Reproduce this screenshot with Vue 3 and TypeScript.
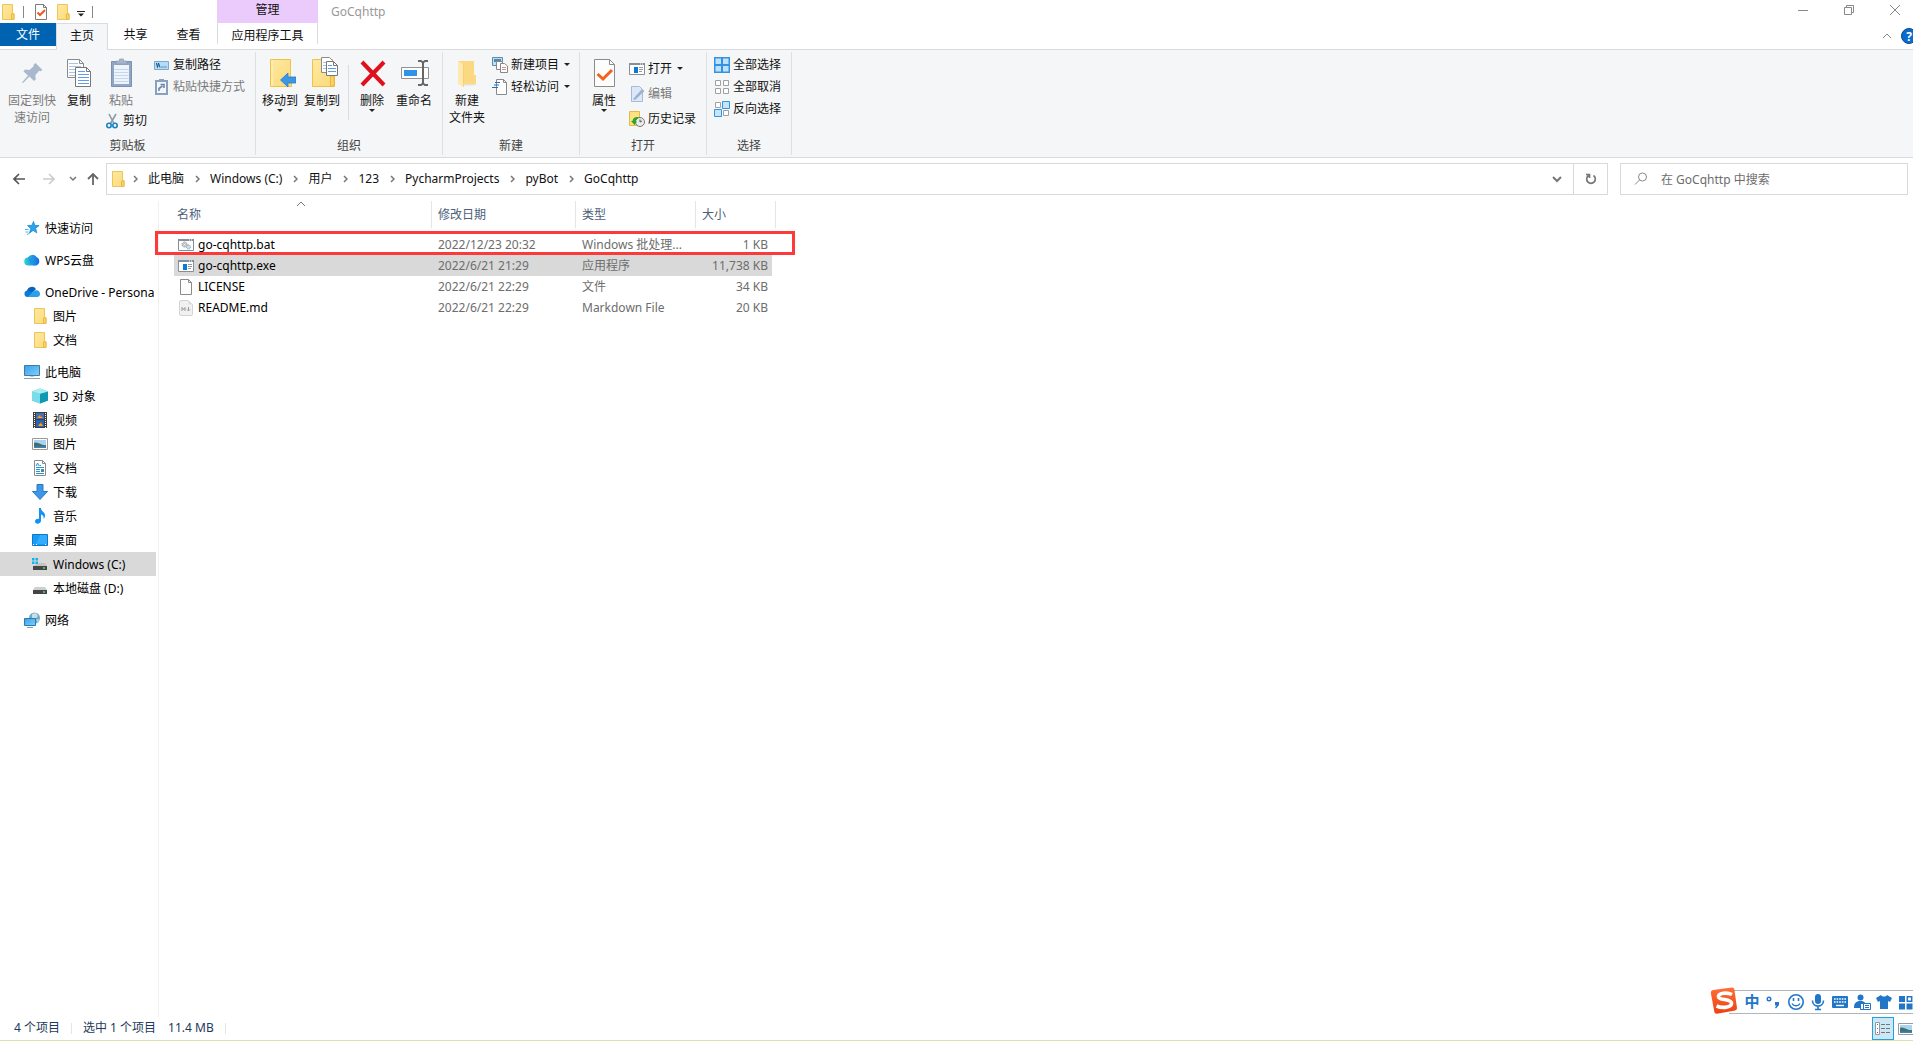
<script setup lang="ts">
interface NavItem {
  label: string
  icon: string
  child?: boolean
  selected?: boolean
}
interface FileRow {
  name: string
  icon: string
  date: string
  type: string
  size: string
  selected?: boolean
}

const navGroups: NavItem[][] = [
  [{ label: '快速访问', icon: 'star' }],
  [{ label: 'WPS云盘', icon: 'wps' }],
  [
    { label: 'OneDrive - Persona', icon: 'onedrive' },
    { label: '图片', icon: 'folder', child: true },
    { label: '文档', icon: 'folder', child: true },
  ],
  [
    { label: '此电脑', icon: 'pc' },
    { label: '3D 对象', icon: 'cube', child: true },
    { label: '视频', icon: 'video', child: true },
    { label: '图片', icon: 'picture', child: true },
    { label: '文档', icon: 'document', child: true },
    { label: '下载', icon: 'download', child: true },
    { label: '音乐', icon: 'music', child: true },
    { label: '桌面', icon: 'desktop', child: true },
    { label: 'Windows (C:)', icon: 'drive-c', child: true, selected: true },
    { label: '本地磁盘 (D:)', icon: 'drive', child: true },
  ],
  [{ label: '网络', icon: 'network' }],
]

const crumbs: string[] = ['此电脑', 'Windows (C:)', '用户', '123', 'PycharmProjects', 'pyBot', 'GoCqhttp']

const files: FileRow[] = [
  { name: 'go-cqhttp.bat', icon: 'bat', date: '2022/12/23 20:32', type: 'Windows 批处理...', size: '1 KB' },
  { name: 'go-cqhttp.exe', icon: 'exe', date: '2022/6/21 21:29', type: '应用程序', size: '11,738 KB', selected: true },
  { name: 'LICENSE', icon: 'blank', date: '2022/6/21 22:29', type: '文件', size: '34 KB' },
  { name: 'README.md', icon: 'md', date: '2022/6/21 22:29', type: 'Markdown File', size: '20 KB' },
]

const imeIcons: string[] = ['punct', 'smile', 'mic', 'keyboard', 'user', 'shirt', 'grid']
</script>

<template>
  <div class="window">
    <svg class="sprite" aria-hidden="true">
      <defs>
        <linearGradient id="g-folder" x1="0" y1="0" x2="1" y2="1">
          <stop offset="0" stop-color="#ffe9a2" /><stop offset="1" stop-color="#fbd978" />
        </linearGradient>
        <linearGradient id="g-sky" x1="0" y1="0" x2="1" y2="1">
          <stop offset="0" stop-color="#3aa0ee" /><stop offset="1" stop-color="#7fd0fb" />
        </linearGradient>
        <linearGradient id="g-wps" x1="0" y1="0" x2="1" y2="0">
          <stop offset="0" stop-color="#2fd6c8" /><stop offset="1" stop-color="#1268f0" />
        </linearGradient>
        <linearGradient id="g-sogou" x1="0" y1="0" x2="0" y2="1">
          <stop offset="0" stop-color="#ff7038" /><stop offset="1" stop-color="#ee4012" />
        </linearGradient>
      </defs>
      <symbol id="folder" viewBox="0 0 16 16">
        <path d="M2.500.5h10v9h1.500v6h-11.500z" fill="url(#g-folder)" stroke="#ecc556" />
        <path d="M11.500 15.500v-5.500h2.500v5.500z" fill="#fbd36a" stroke="#e8bb45" />
      </symbol>
      <symbol id="doc-check" viewBox="0 0 16 16">
        <path d="M2.500.5h8l3 3v12h-11z" fill="#fff" stroke="#7d7d7d" />
        <path d="M10.500.5v3h3" fill="none" stroke="#7d7d7d" />
        <path d="M4.500 8.500l2.500 2.500 5-5" fill="none" stroke="#f0581c" stroke-width="2" />
      </symbol>
      <symbol id="star" viewBox="0 0 16 16">
        <path d="M9.500 1.500l1.300 4 4.200.1-3.400 2.600 1.200 4.600-3.600-2.400-3.700 2.600 1.400-4.300L3.500 5.500l4.400-.1z" fill="#2aa4ee" stroke="#1c86d2" stroke-width=".8" />
        <path d="M1 9.500h3.500M1.500 12h3M3 14.500l2.500-1" stroke="#4bb4f0" />
      </symbol>
      <symbol id="wps" viewBox="0 0 16 16">
        <path d="M4.500 13.500a4 4 0 0 1-.5-8 5 5 0 0 1 8.500-.5 4.500 4.500 0 0 1-.5 8.500z" fill="url(#g-wps)" />
        <path d="M4 5.500c3 0 5 4 8 8h-2.500C6 11 5 8 4 5.500z" fill="#1c8df4" opacity=".7" />
      </symbol>
      <symbol id="onedrive" viewBox="0 0 16 16">
        <path d="M3 7a5 5 0 0 1 9-2l-4 4z" fill="#0364b8" />
        <path d="M3.500 13A3.300 3.300 0 0 1 3 6.500c3-.5 6 3 9 6.500z" fill="#0f78d4" />
        <path d="M3.500 13l7-6.500c3-1 5.500.5 5.500 3.500a3 3 0 0 1-3 3z" fill="#28a0ea" />
      </symbol>
      <symbol id="pc" viewBox="0 0 16 16">
        <path d="M.5 1.500h15v10h-15z" fill="url(#g-sky)" stroke="#447a9e" />
        <path d="M6 12h4v1H6z" fill="#b8cdd8" /><path d="M0 14.500h16" stroke="#87a4b5" />
      </symbol>
      <symbol id="cube" viewBox="0 0 16 16">
        <path d="M0 3.500L8 .5l8 3v9l-8 3-8-3z" fill="#37b9d0" />
        <path d="M0 3.500l8 2.200v9.800l-8-3z" fill="#79dce6" />
        <path d="M8 5.700l8-2.200v9l-8 3z" fill="#0f97b3" />
        <path d="M0 3.500L8 .5l8 3-8 2.200z" fill="#a8eef0" />
      </symbol>
      <symbol id="video" viewBox="0 0 16 16">
        <path d="M1 0h14v16H1z" fill="#3d3d3d" /><path d="M4 1h8v6H4z" fill="#3d72b8" /><path d="M4 8h8v7H4z" fill="#2b62b0" />
        <path d="M5 6l3-3 3 3zM6 14l3-4 2 4z" fill="#e5a52f" /><path d="M8 4h2M8 11h2" stroke="#d13c2c" />
        <path d="M2.500 1v15M13.500 1v15" stroke="#fff" stroke-dasharray="1 1" />
      </symbol>
      <symbol id="picture" viewBox="0 0 16 16">
        <path d="M.5 2.500h15v11H.5z" fill="#fff" stroke="#9a9a9a" />
        <path d="M2 4h12v8H2z" fill="#a7d4f2" /><path d="M2 7c4-2 7 3 12 2v3H2z" fill="#466e6a" /><path d="M2 10.500h12V12H2z" fill="#3d85b6" />
      </symbol>
      <symbol id="document" viewBox="0 0 16 16">
        <path d="M2.500.5h8l3 3v12h-11z" fill="#fff" stroke="#8a8a8a" /><path d="M10.500.5v3h3" fill="none" stroke="#8a8a8a" />
        <path d="M4 6l1.500-3L7 6M7.500 5.500H9M4 7.500h8M4 9.500h4M4 11.500h4M4 13.500h8" fill="none" stroke="#2196d8" /><path d="M9 9h3v3H9z" fill="#4f87a0" />
      </symbol>
      <symbol id="download" viewBox="0 0 16 16">
        <path d="M5 .5h6v7h4.500L8 15.500.5 7.500H5z" fill="#3d97e6" stroke="#2e79c4" />
      </symbol>
      <symbol id="music" viewBox="0 0 16 16">
        <path d="M7 0h2c0 4 4.500 4 4 8-.2 1.500-1 2.500-1.500 3 .5-3-.5-4-2.500-4.500V12.500c0 4-6 4-6 1 0-2 2-3 4-2.500z" fill="#1192f5" />
      </symbol>
      <symbol id="desktop" viewBox="0 0 16 16">
        <path d="M.5 2.500h15v11H.5z" fill="#169df8" stroke="#0f79c9" /><path d="M8 3h7v9H4z" fill="#32acfb" /><path d="M1 12.500h14" stroke="#fff" stroke-dasharray="1 2 1 8" />
      </symbol>
      <symbol id="drive" viewBox="0 0 16 16">
        <path d="M3 7h10l2 3H1z" fill="#cfcfcf" /><path d="M1 10h14v4H1z" fill="#454545" /><path d="M11 12h2" stroke="#4ee060" stroke-width="1.500" />
      </symbol>
      <symbol id="drive-c" viewBox="0 0 16 16">
        <path d="M5 7h8l2 3H2z" fill="#c4c4c4" /><path d="M1 10h14v4H1z" fill="#454545" /><path d="M11 12h2" stroke="#4ee060" stroke-width="1.500" />
        <path d="M0 2h2.500v2.500H0zM3.500 2H6v2.500H3.500zM0 5.500h2.500V8H0zM3.500 5.500H6V8H3.500z" fill="#10b2f0" />
      </symbol>
      <symbol id="network" viewBox="0 0 16 16">
        <circle cx="10.500" cy="6" r="5.500" fill="#6faac8" /><path d="M8 2l4-1 2 3-3 3-3-1zM12 8l3-1-1 3z" fill="#c5dfe9" />
        <path d="M.5 6.500h11v7H.5z" fill="url(#g-sky)" stroke="#2d78ad" /><path d="M3 15.500h6" stroke="#6fa1c0" />
      </symbol>
      <symbol id="bat" viewBox="0 0 16 16">
        <path d="M.5 2.500h15v11H.5z" fill="#fff" stroke="#878f96" /><path d="M0 2h16v2H0z" fill="#878f96" />
        <path d="M11 3h1M13 3h1" stroke="#fff" />
        <circle cx="6.500" cy="7.500" r="2.500" fill="#ddd" stroke="#888" stroke-dasharray="1 .6" /><circle cx="6.500" cy="7.500" r="1" fill="#fff" stroke="#999" stroke-width=".6" />
        <circle cx="10.500" cy="10" r="2" fill="#c5e0f4" stroke="#6d98b8" stroke-dasharray="1 .6" />
      </symbol>
      <symbol id="exe" viewBox="0 0 16 16">
        <path d="M.5 2.500h15v11H.5z" fill="#fff" stroke="#878f96" /><path d="M0 2h16v2H0z" fill="#878f96" />
        <path d="M11 3h1M13 3h1" stroke="#fff" /><path d="M5 6h4v6H5z" fill="#0a78d6" /><path d="M10 6.500h4M10 8.500h4M10 10.500h3" stroke="#999" />
      </symbol>
      <symbol id="blank" viewBox="0 0 16 16">
        <path d="M2.500.5h8l3 3v12h-11z" fill="#fdfdfd" stroke="#8a8a8a" /><path d="M10.500.5v3h3" fill="none" stroke="#8a8a8a" />
      </symbol>
      <symbol id="md" viewBox="0 0 16 16">
        <path d="M3 .5h7.500l4 4V14a1.500 1.500 0 0 1-1.500 1.500H3A1.500 1.500 0 0 1 1.500 14V2A1.500 1.500 0 0 1 3 .5z" fill="#f1f1f1" stroke="#d4d4d4" /><path d="M10.500.5v4h4" fill="#ddd" />
        <path d="M4 11V7.500l1.500 2 1.500-2V11M10.500 7v3.500M9 9.500l1.500 1.500L12 9.500" fill="none" stroke="#999" />
      </symbol>
      <symbol id="pin" viewBox="0 0 32 32">
        <path d="M19.500 6l7 7-2 1.200-1.300-.4-3.800 4.200.3 4.500-1.700 1.500-4.500-4.500L7 26l-1-.5 6-7-4.500-4 1.500-2 4.500.4 4.300-3.800-.3-1.400z" fill="#a9b8cd" />
      </symbol>
      <symbol id="copy" viewBox="0 0 32 32">
        <path d="M4.500 2.500h12l4 4v14h-16z" fill="#fdfdfd" stroke="#8b8b8b" /><path d="M16.500 2.500v4h4" fill="none" stroke="#8b8b8b" />
        <path d="M6 6.500h9M6 9.500h12M6 12.500h6M6 15.500h6M6 18.500h6" stroke="#a5c4ea" />
        <path d="M12.500 10.500h11l4 4v15h-15z" fill="#fff" stroke="#777" /><path d="M23.500 10.500v4h4" fill="none" stroke="#777" />
        <path d="M15 14.500h7M15 17.500h11M15 20.500h11M15 23.500h11M15 26.500h11" stroke="#5d9cec" />
      </symbol>
      <symbol id="paste" viewBox="0 0 32 32">
        <path d="M6.500 4.500h20v25h-20z" fill="#91a5c4" stroke="#7c91b3" /><path d="M9 8h15v19H9z" fill="#eef4fc" />
        <path d="M9.500 12.500h14M9.500 15.500h14M9.500 18.500h14M9.500 21.500h14M9.500 24.500h14" stroke="#c7d6ec" />
        <path d="M11 7V4h3.500V2h4v2H22v3z" fill="#a6b5cc" stroke="#8496b4" stroke-width=".6" />
      </symbol>
      <symbol id="cut" viewBox="0 0 16 16">
        <path d="M5 1l5 9.500M12 1L6.500 10.500" stroke="#8d9aa6" stroke-width="1.600" /><circle cx="5" cy="12.500" r="2.200" fill="none" stroke="#1684c6" stroke-width="1.600" /><circle cx="11" cy="12.500" r="2.200" fill="none" stroke="#1684c6" stroke-width="1.600" />
      </symbol>
      <symbol id="path" viewBox="0 0 16 16">
        <path d="M.5 4.500h14v8H.5z" fill="#b4dcf8" stroke="#7ea9c9" /><path d="M2.500 6l1 4.500 1-4.500 1.500 4.500M7.500 10h1M9.500 10h1M11.500 10h1" fill="none" stroke="#1b4f7c" />
      </symbol>
      <symbol id="paste-link" viewBox="0 0 16 16">
        <path d="M2 2h11v13H2z" fill="#f3f7fc" stroke="#8b9fbe" stroke-width="2" /><path d="M5 0h5v3H5z" fill="#8b9fbe" />
        <path d="M5 12V9.500L8.500 7M6.500 5.500H10V9" fill="none" stroke="#6d86ac" stroke-width="1.600" />
      </symbol>
      <symbol id="move-to" viewBox="0 0 32 32">
        <path d="M6.500 2.500h20v19h1v8h-21z" fill="url(#g-folder)" stroke="#ecc248" /><path d="M8 3v26" stroke="#fff3c8" />
        <path d="M16.500 23l7.500-7v4h8v6h-8v4z" fill="#3a96e6" stroke="#2b7dc9" stroke-width=".8" />
      </symbol>
      <symbol id="copy-to" viewBox="0 0 32 32">
        <path d="M6.500 2.500h20v17h2v10h-22z" fill="url(#g-folder)" stroke="#ecc248" /><path d="M24.500 29v-10h3.500v10z" fill="#fbd36a" stroke="#e8b93a" />
        <path d="M15.500.5h8l3 3v12h-11z" fill="#fff" stroke="#8b8b8b" /><path d="M17 5.500h4M17 8.500h4M17 11.500h4" stroke="#a5c4ea" />
        <path d="M20.500 4.500h7l4 4v10h-11z" fill="#fff" stroke="#777" /><path d="M27.500 4.500v4h4" fill="none" stroke="#777" /><path d="M22 8.500h4M22 11.500h8M22 14.500h8" stroke="#5d9cec" />
      </symbol>
      <symbol id="delete" viewBox="0 0 32 32">
        <path d="M6 5L28 28M28 5L6 28" stroke="#e0101a" stroke-width="4" />
      </symbol>
      <symbol id="rename" viewBox="0 0 32 32">
        <path d="M3.500 10.500h27v11h-27z" fill="#fff" stroke="#919191" /><path d="M6 13h13v6H6z" fill="#2f93ea" />
        <path d="M25 5v22" stroke="#666" stroke-width="2" /><path d="M20 4h3l2 1.500 2-1.500h3M20 28h3l2-1.500 2 1.500h3" fill="none" stroke="#666" stroke-width="2" />
      </symbol>
      <symbol id="new-folder" viewBox="0 0 32 32">
        <path d="M7 4h16v14h2v9h-14z" fill="#fbd980" /><path d="M7 4l5.500 3.500V30L7 27z" fill="#ffe9ae" /><path d="M12.500 7.500V30" stroke="#f0c65e" stroke-width=".6" /><path d="M13 27h13l-3 1.500h-10z" fill="#e8e2d0" />
      </symbol>
      <symbol id="new-item" viewBox="0 0 16 16">
        <path d="M.5.5h10v8H.5z" fill="#bfe0f4" stroke="#5f8ba6" /><path d="M2 2h7v3H2z" fill="#4e8bb2" />
        <path d="M4.500 4.500h6v8h-6z" fill="#fff" stroke="#888" /><path d="M8.500 6.500h4l3 2.500v6.500h-7z" fill="#fff" stroke="#888" /><path d="M10 10.500h4M10 12.500h4" stroke="#d98c8c" />
      </symbol>
      <symbol id="easy" viewBox="0 0 16 16">
        <path d="M4.500.5h7l3 3v12h-10z" fill="#fff" stroke="#8a8a8a" /><path d="M11.500.5v3h3" fill="none" stroke="#8a8a8a" /><path d="M3 3.500h5M2 6h5M0 8.500h6" stroke="#2072b8" stroke-width="1.200" />
      </symbol>
      <symbol id="props" viewBox="0 0 32 32">
        <path d="M6.500 2.500h15l5 5v22h-20z" fill="#fdfdfd" stroke="#8b8b8b" /><path d="M21.500 2.500v5h5" fill="none" stroke="#8b8b8b" /><path d="M9.500 17l5.500 5 9-9" fill="none" stroke="#f2641c" stroke-width="3" />
      </symbol>
      <symbol id="edit" viewBox="0 0 16 16">
        <path d="M2.500.5h8l3 3v12h-11z" fill="#dce8f7" stroke="#a7bbd6" /><path d="M4 13l9-10 2.500 2L6 14z" fill="#9db2d0" />
      </symbol>
      <symbol id="history" viewBox="0 0 16 16">
        <path d="M.5.5h10v14H.5z" fill="#ffe17e" stroke="#e2bb48" /><circle cx="11" cy="11" r="4.500" fill="#ececec" stroke="#777" /><path d="M11 8.500V11l2-1" fill="none" stroke="#555" />
        <path d="M2 10l3.500 4 2.500-3.500H6.500c.5-2 2-3.500 4.500-4-4-1.500-7 0-7.500 3.500z" fill="#28a828" />
      </symbol>
      <symbol id="sel-all" viewBox="0 0 16 16">
        <path d="M0 0h16v16H0z" fill="#3492e2" /><path d="M1.500 1.500H7V7H1.500zM9 1.500h5.500V7H9zM1.500 9H7v5.500H1.500zM9 9h5.500v5.500H9z" fill="#bfe2fc" />
      </symbol>
      <symbol id="sel-none" viewBox="0 0 16 16">
        <path d="M1.500 1.500h5v5h-5zM9.500 1.500h5v5h-5zM1.500 9.500h5v5h-5zM9.500 9.500h5v5h-5z" fill="#fff" stroke="#a0a0a0" />
      </symbol>
      <symbol id="sel-inv" viewBox="0 0 16 16">
        <path d="M1.500 1.500h5v5h-5zM9.500 9.500h5v5h-5z" fill="#fff" stroke="#a0a0a0" /><path d="M8.500.5h7v7h-7zM.5 8.500h7v7h-7z" fill="#c5e5fd" stroke="#3492e2" />
      </symbol>
      <symbol id="punct" viewBox="0 0 18 18">
        <circle cx="4" cy="6" r="1.800" fill="none" stroke="#2176c7" stroke-width="1.400" /><path d="M10 9h4v3l-3 3.500-1-.8 1.500-2.200H10z" fill="#2176c7" />
      </symbol>
      <symbol id="smile" viewBox="0 0 18 18">
        <circle cx="9" cy="9" r="7.200" fill="none" stroke="#2176c7" stroke-width="1.600" /><path d="M6.500 5v3M11.500 5v3" stroke="#2176c7" stroke-width="1.600" /><path d="M5 10.500c1.500 3 6.500 3 8 0" fill="none" stroke="#2176c7" stroke-width="1.400" />
      </symbol>
      <symbol id="mic" viewBox="0 0 18 18">
        <rect x="6" y="1" width="6" height="10" rx="3" fill="#2176c7" /><path d="M3.500 7.500c0 7.500 11 7.500 11 0M9 13v3.500M6 16.500h6" fill="none" stroke="#2176c7" stroke-width="1.600" />
      </symbol>
      <symbol id="keyboard" viewBox="0 0 18 18">
        <rect x="1" y="3" width="16" height="12" rx="1" fill="#2176c7" /><path d="M3 6h12M3 9h12" stroke="#fff" stroke-width="1.600" stroke-dasharray="1.600 1" /><path d="M5 12.500h8" stroke="#fff" stroke-width="1.400" />
      </symbol>
      <symbol id="user" viewBox="0 0 18 18">
        <circle cx="7.500" cy="4.500" r="3" fill="#2176c7" /><path d="M1 15c0-5 2-7 6.500-7S13 10 14 15z" fill="#2176c7" /><path d="M7.500 10.500h10v6h-10z" fill="#fff" stroke="#2176c7" /><path d="M10.500 11v5M12 12.500h4M12 14.500h4" stroke="#2176c7" />
      </symbol>
      <symbol id="shirt" viewBox="0 0 18 18">
        <path d="M6 2c1 2 5 2 6 0l5 3-2 4-2-1v8H5V8L3 9 1 5z" fill="#2176c7" />
      </symbol>
      <symbol id="grid" viewBox="0 0 18 18">
        <path d="M2 3h6v6H2zM2 10.500h6v6H2zM9.500 10.500h6v6h-6z" fill="#2176c7" /><path d="M10.300 3.800h4.400v4.400h-4.400z" fill="#fff" stroke="#2176c7" stroke-width="1.500" />
      </symbol>
    </svg>

    <header class="top">
      <div class="qat">
        <svg class="i16"><use href="#folder" /></svg>
        <i class="qsep"></i>
        <button type="button" aria-label="属性"><svg class="i16"><use href="#doc-check" /></svg></button>
        <button type="button" aria-label="新建文件夹"><svg class="i16"><use href="#folder" /></svg></button>
        <button type="button" aria-label="自定义快速访问工具栏"><svg width="8" height="6" viewBox="0 0 8 6"><path d="M0 0h8v1H0zM1 2.500h6l-3 3z" fill="#222" /></svg></button>
        <i class="qsep"></i>
      </div>
      <div class="context">管理</div>
      <div class="title">GoCqhttp</div>
      <div class="controls">
        <button type="button" aria-label="最小化"><svg width="10" height="10" viewBox="0 0 10 10"><path d="M0 5.500h10" stroke="#888" /></svg></button>
        <button type="button" aria-label="还原"><svg width="10" height="10" viewBox="0 0 10 10"><path d="M.5 2.500h7v7h-7zM2.500 2V.5h7v7H8" fill="none" stroke="#888" /></svg></button>
        <button type="button" aria-label="关闭"><svg width="10" height="10" viewBox="0 0 10 10"><path d="M0 0l10 10M10 0L0 10" stroke="#888" /></svg></button>
      </div>
    </header>

    <nav class="tabs">
      <button type="button" class="tab file">文件</button>
      <button type="button" class="tab home">主页</button>
      <button type="button" class="tab share">共享</button>
      <button type="button" class="tab view">查看</button>
      <button type="button" class="tab tools">应用程序工具</button>
      <div class="help">
        <button type="button" aria-label="折叠功能区"><svg width="8" height="6" viewBox="0 0 8 6"><path d="M0 5l4-4 4 4" fill="none" stroke="#888" /></svg></button>
        <button type="button" class="q" aria-label="帮助">?</button>
      </div>
    </nav>

    <section class="ribbon">
      <div class="group clip">
        <div class="tools-row">
          <button type="button" class="big wide dim"><svg><use href="#pin" /></svg><span>固定到快<br />速访问</span></button>
          <button type="button" class="big"><svg><use href="#copy" /></svg><span>复制</span></button>
          <div class="stack">
            <button type="button" class="big dim"><svg><use href="#paste" /></svg><span>粘贴</span></button>
            <button type="button" class="small cut"><svg class="i16"><use href="#cut" /></svg>剪切</button>
          </div>
          <div class="rows">
            <button type="button" class="small"><svg class="i16"><use href="#path" /></svg>复制路径</button>
            <button type="button" class="small dim"><svg class="i16"><use href="#paste-link" /></svg>粘贴快捷方式</button>
          </div>
        </div>
        <div class="caption">剪贴板</div>
      </div>
      <div class="group org">
        <div class="tools-row">
          <button type="button" class="big"><svg><use href="#move-to" /></svg><span>移动到</span><i class="arrow"></i></button>
          <button type="button" class="big"><svg><use href="#copy-to" /></svg><span>复制到</span><i class="arrow"></i></button>
          <i class="inner"></i>
          <button type="button" class="big"><svg><use href="#delete" /></svg><span>删除</span><i class="arrow"></i></button>
          <button type="button" class="big"><svg><use href="#rename" /></svg><span>重命名</span></button>
        </div>
        <div class="caption">组织</div>
      </div>
      <div class="group new">
        <div class="tools-row">
          <button type="button" class="big mid"><svg><use href="#new-folder" /></svg><span>新建<br />文件夹</span></button>
          <div class="rows">
            <button type="button" class="small"><svg class="i16"><use href="#new-item" /></svg>新建项目<i class="arrow"></i></button>
            <button type="button" class="small"><svg class="i16"><use href="#easy" /></svg>轻松访问<i class="arrow"></i></button>
          </div>
        </div>
        <div class="caption">新建</div>
      </div>
      <div class="group open">
        <div class="tools-row">
          <button type="button" class="big mid"><svg><use href="#props" /></svg><span>属性</span><i class="arrow"></i></button>
          <div class="rows loose">
            <button type="button" class="small"><svg class="i16"><use href="#exe" /></svg>打开<i class="arrow"></i></button>
            <button type="button" class="small dim"><svg class="i16"><use href="#edit" /></svg>编辑</button>
            <button type="button" class="small"><svg class="i16"><use href="#history" /></svg>历史记录</button>
          </div>
        </div>
        <div class="caption">打开</div>
      </div>
      <div class="group select">
        <div class="tools-row">
          <div class="rows">
            <button type="button" class="small"><svg class="i16"><use href="#sel-all" /></svg>全部选择</button>
            <button type="button" class="small"><svg class="i16"><use href="#sel-none" /></svg>全部取消</button>
            <button type="button" class="small"><svg class="i16"><use href="#sel-inv" /></svg>反向选择</button>
          </div>
        </div>
        <div class="caption">选择</div>
      </div>
    </section>

    <div class="address-row">
      <div class="travel">
        <button type="button" aria-label="后退"><svg width="12" height="12" viewBox="0 0 12 12"><path d="M12 6H1M6 1L1 6l5 5" fill="none" stroke="#555" stroke-width="1.600" /></svg></button>
        <button type="button" aria-label="前进"><svg width="12" height="12" viewBox="0 0 12 12"><path d="M0 6h11M6 1l5 5-5 5" fill="none" stroke="#ccc" stroke-width="1.600" /></svg></button>
        <button type="button" aria-label="最近位置"><svg width="8" height="6" viewBox="0 0 8 6"><path d="M1 1l3 3 3-3" fill="none" stroke="#777" stroke-width="1.500" /></svg></button>
        <button type="button" aria-label="上移"><svg width="12" height="12" viewBox="0 0 12 12"><path d="M6 12V1M1 6l5-5 5 5" fill="none" stroke="#666" stroke-width="1.800" /></svg></button>
      </div>
      <div class="address">
        <svg class="i16"><use href="#folder" /></svg>
        <template v-for="crumb in crumbs" :key="crumb">
          <svg class="chev" width="5" height="8" viewBox="0 0 5 8"><path d="M1 1l3 3-3 3" fill="none" stroke="#777" stroke-width="1.500" /></svg>
          <button type="button" class="crumb">{{ crumb }}</button>
        </template>
        <button type="button" class="drop" aria-label="以前的位置"><svg width="10" height="7" viewBox="0 0 10 7"><path d="M1 1l4 4 4-4" fill="none" stroke="#777" stroke-width="2" /></svg></button>
        <button type="button" class="refresh" aria-label="刷新"><svg width="12" height="12" viewBox="0 0 12 12"><path d="M8.500 2.500a4.300 4.300 0 1 1-5 0M1 1.500h3.500V5" fill="none" stroke="#777" stroke-width="1.700" /></svg></button>
      </div>
      <label class="search">
        <svg width="14" height="14" viewBox="0 0 14 14"><circle cx="8.500" cy="5" r="4" fill="none" stroke="#888" /><path d="M5.500 8L1 12.500" stroke="#888" /></svg>
        <input type="text" aria-label="搜索" placeholder="在 GoCqhttp 中搜索" />
      </label>
    </div>

    <div class="body">
      <aside class="nav">
        <ul v-for="(group, gi) in navGroups" :key="gi">
          <li v-for="item in group" :key="item.label">
            <a href="#" :class="{ child: item.child, selected: item.selected }">
              <svg class="i16"><use :href="'#' + item.icon" /></svg><span>{{ item.label }}</span>
            </a>
          </li>
        </ul>
      </aside>
      <main class="pane">
        <table>
          <colgroup><col class="c-name" /><col class="c-date" /><col class="c-type" /><col class="c-size" /></colgroup>
          <thead>
            <tr>
              <th class="first"><div>名称<svg class="sort" width="10" height="6" viewBox="0 0 10 6"><path d="M1 5l4-4 4 4" fill="none" stroke="#777" /></svg></div></th>
              <th><div>修改日期</div></th>
              <th><div>类型</div></th>
              <th><div>大小</div></th>
            </tr>
          </thead>
          <tbody>
            <tr v-for="file in files" :key="file.name" :class="{ selected: file.selected }">
              <td class="name"><span><svg class="i16"><use :href="'#' + file.icon" /></svg>{{ file.name }}</span></td>
              <td>{{ file.date }}</td>
              <td>{{ file.type }}</td>
              <td class="size">{{ file.size }}</td>
            </tr>
          </tbody>
        </table>
        <div class="mark"></div>
      </main>
    </div>

    <footer class="status">
      <span>4 个项目</span><i></i><span>选中 1 个项目</span><span class="bytes">11.4 MB</span><i></i>
      <div class="views">
        <button type="button" class="on" aria-label="详细信息"><svg width="16" height="14" viewBox="0 0 16 14"><path d="M.5.5h4v12h-4z" fill="#fff" stroke="#999" /><path d="M2 2.500h1" stroke="#3a9a4a" /><path d="M2 6.500h1" stroke="#2f7fd0" /><path d="M2 10.500h1" stroke="#d03030" /><path d="M6 2.500h10M6 6.500h10M6 10.500h10" stroke="#777" stroke-dasharray="4 1" /></svg></button>
        <button type="button" aria-label="大缩略图"><svg class="i16"><use href="#picture" /></svg></button>
      </div>
    </footer>

    <div class="ime">
      <svg class="logo" width="30" height="30" viewBox="0 0 30 30">
        <path d="M4 4L23 1.500q2 0 2.400 2L28 22q.2 2-1.800 2.400L8 27.800q-2.200.2-2.600-1.800L1.800 7Q1.600 4.500 4 4z" fill="url(#g-sogou)" />
        <path d="M23 8.500c-5-2.500-14-1.500-13.500 2.500.5 3.500 12.500 1.500 13 6 .5 4.500-9 5.500-15 3" fill="none" stroke="#fff" stroke-width="3.600" />
      </svg>
      <button type="button" class="zh">中</button>
      <button v-for="icon in imeIcons" :key="icon" type="button" :aria-label="icon"><svg width="18" height="18"><use :href="'#' + icon" /></svg></button>
    </div>
  </div>
</template>

<style>
body {
  margin: 0;
}
</style>

<style scoped>
* {
  box-sizing: border-box;
}
.window {
  position: relative;
  display: flex;
  flex-direction: column;
  min-height: 100vh;
  overflow: hidden;
  background: #fff;
  border-bottom: 1px solid #d8e2b0;
  color: #111;
  font: 12px/17px "Noto Sans", "Noto Sans CJK SC", sans-serif;
}
.sprite {
  position: absolute;
  width: 0;
  height: 0;
}
button {
  display: flex;
  align-items: center;
  padding: 0;
  border: 0;
  background: none;
  color: inherit;
  font: inherit;
  white-space: nowrap;
}
svg {
  display: block;
  flex: none;
}
.i16 {
  width: 16px;
  height: 16px;
}
.top {
  display: flex;
  height: 23px;
}
.qat {
  display: flex;
  align-items: center;
  width: 217px;
}
.qsep {
  width: 1px;
  height: 12px;
  margin: 0 9px 0 7px;
  background: #888;
}
.qat button {
  margin-right: 6px;
}
.qat button:nth-of-type(3) {
  height: 16px;
  margin: 4px 0 0;
}
.context {
  width: 101px;
  background: #ebcbfb;
  line-height: 19px;
  text-align: center;
}
.title {
  flex: 1;
  padding-left: 13px;
  color: #999;
  line-height: 23px;
}
.controls {
  display: flex;
}
.controls button {
  width: 46px;
  height: 20px;
  padding-left: 18px;
}
.controls button:last-child {
  width: 41px;
}
.tabs {
  display: flex;
  height: 27px;
  border-bottom: 1px solid #dadbdc;
}
.tab {
  justify-content: center;
  height: 23px;
}
.file {
  width: 56px;
  background: #0063b1;
  color: #fff;
}
.home {
  width: 52px;
  height: 27px;
  padding-bottom: 3px;
  border: 1px solid #dadbdc;
  border-bottom: 0;
  background: #f5f6f7;
}
.share,
.view {
  width: 53px;
}
.share {
  margin-left: 1px;
}
.tools {
  width: 101px;
  height: 21px;
  margin-left: 2px;
  padding-top: 3px;
  border: solid #dadbdc;
  border-width: 0 1px;
}
.help {
  display: flex;
  align-items: center;
  margin-left: auto;
  width: 30px;
}
.help button {
  flex: none;
}
.help .q {
  justify-content: center;
  width: 16px;
  height: 16px;
  margin-left: 10px;
  border: 1px solid #0b4a86;
  border-radius: 50%;
  background: #0a6cce;
  color: #fff;
  font-weight: bold;
}
.ribbon {
  display: flex;
  height: 108px;
  padding: 2px 0;
  background: #f5f6f7;
  border-bottom: 1px solid #dadbdc;
}
.group {
  display: flex;
  flex-direction: column;
  border-right: 1px solid #dfe0e1;
}
.clip {
  width: 256px;
}
.org {
  width: 187px;
}
.new {
  width: 137px;
}
.open {
  width: 127px;
}
.select {
  width: 85px;
}
.tools-row {
  display: flex;
  flex: 1;
  align-items: flex-start;
}
.clip .tools-row {
  padding-left: 6px;
}
.org .tools-row {
  padding-left: 3px;
}
.select .tools-row {
  padding-left: 7px;
}
.caption {
  height: 20px;
  line-height: 22px;
  color: #444;
  text-align: center;
}
.big {
  flex-direction: column;
  width: 42px;
  padding-top: 5px;
}
.big.wide {
  width: 52px;
}
.big.mid {
  width: 48px;
}
.big svg {
  width: 32px;
  height: 32px;
  margin-bottom: 3px;
}
.dim {
  color: #7a7a7a;
}
.stack {
  width: 54px;
}
.cut {
  padding-left: 4px;
}
.rows {
  padding-top: 1px;
}
.rows.loose {
  padding-top: 4px;
}
.new .rows,
.open .rows {
  margin-left: 1px;
}
.small {
  gap: 3px;
  height: 22px;
}
.small svg {
  margin-top: 2px;
}
.loose .small {
  height: 25px;
}
.loose .small svg {
  margin-top: 0;
}
.arrow {
  width: 0;
  height: 0;
  border: solid transparent;
  border-width: 3px 3px 0;
  border-top-color: #222;
}
.small .arrow {
  margin-left: 2px;
}
.inner {
  width: 1px;
  height: 55px;
  margin: 13px 2px 0 5px;
  background: #dcddde;
}
.address-row {
  display: flex;
  height: 43px;
  padding: 5px 5px 0 13px;
}
.travel {
  display: flex;
  align-items: center;
  width: 93px;
  height: 32px;
}
.travel button {
  margin-right: 18px;
}
.travel button:nth-child(2) {
  margin-right: 14px;
}
.travel button:nth-child(3) {
  margin-right: 10px;
}
.travel button:last-child {
  margin-right: 0;
}
.address {
  display: flex;
  flex: 1;
  align-items: center;
  height: 32px;
  padding-left: 3px;
  border: 1px solid #d9d9d9;
}
.address .chev {
  margin: 0 10px 0 11px;
}
.address .i16 + .chev {
  margin-left: 7px;
}
.crumb {
  padding-bottom: 2px;
}
.drop {
  margin: 0 11px 0 auto;
}
.refresh {
  justify-content: center;
  width: 34px;
  height: 30px;
  border-left: 1px solid #d9d9d9;
}
.search {
  display: flex;
  align-items: center;
  width: 288px;
  height: 32px;
  margin-left: 12px;
  padding-left: 13px;
  border: 1px solid #d9d9d9;
}
.search input {
  flex: 1;
  min-width: 0;
  padding: 0 0 0 13px;
  border: 0;
  outline: 0;
  background: none;
  font: inherit;
}
.search input::placeholder {
  color: #6d6d6d;
  opacity: 1;
}
.body {
  display: flex;
  flex: 1;
}
.nav {
  width: 159px;
  padding: 15px 2px 0 0;
  border-right: 1px solid #f0f0f0;
}
.nav ul {
  margin: 0 0 8px;
  padding: 0;
  list-style: none;
}
.nav a {
  display: flex;
  align-items: center;
  gap: 5px;
  height: 24px;
  padding-left: 24px;
  color: #000;
  text-decoration: none;
  white-space: nowrap;
}
.nav a.child {
  padding-left: 32px;
}
.nav a.selected {
  background: #d9d9d9;
}
.pane {
  position: relative;
  flex: 1;
  padding-left: 15px;
}
table {
  width: 602px;
  table-layout: fixed;
  border-spacing: 0;
}
.c-name {
  width: 258px;
}
.c-date {
  width: 144px;
}
.c-type {
  width: 120px;
}
.c-size {
  width: 80px;
}
th {
  padding: 0 0 6px;
  color: #4c607a;
  font-weight: normal;
  text-align: left;
}
th div {
  position: relative;
  height: 27px;
  padding-left: 6px;
  border-right: 1px solid #e5e5e5;
  line-height: 27px;
}
th.first div {
  padding-left: 3px;
}
.sort {
  position: absolute;
  top: 0;
  left: 50%;
  margin-left: -7px;
}
td {
  height: 21px;
  padding: 0 0 0 6px;
  color: #6d6d6d;
  white-space: nowrap;
}
td.name {
  padding-left: 4px;
  color: #000;
}
td.name span {
  display: flex;
  align-items: center;
  gap: 4px;
}
td.size {
  padding-right: 4px;
  border-right: 4px solid transparent;
  background-clip: padding-box;
  text-align: right;
}
tr.selected td {
  background-color: #d9d9d9;
}
.mark {
  position: absolute;
  top: 30px;
  left: -4px;
  width: 640px;
  height: 24px;
  border: 3px solid #fc3a3a;
}
.status {
  display: flex;
  align-items: center;
  height: 23px;
  padding-left: 14px;
  color: #1e395b;
}
.status span {
  padding-bottom: 2px;
}
.status i {
  width: 1px;
  height: 11px;
  margin: 0 11px;
  background: #e2e6ea;
}
.bytes {
  margin-left: 12px;
}
.views {
  display: flex;
  margin-left: auto;
  width: 41px;
}
.views button {
  flex: none;
  justify-content: center;
  width: 22px;
  height: 23px;
}
.views .on {
  margin-right: 1px;
  border: 1px solid #26a0da;
  background: #cce8f6;
}
.ime {
  position: absolute;
  right: 0;
  bottom: 26px;
  display: flex;
  align-items: center;
  width: 184px;
  height: 24px;
  padding: 0 0 1px 12px;
  border: solid #aeb6be;
  border-width: 1px 0;
  background: #fff;
}
.ime button {
  flex: none;
  justify-content: center;
  width: 22px;
}
.ime .zh {
  color: #2176c7;
  font-size: 15px;
  font-weight: bold;
}
.logo {
  position: absolute;
  top: -5px;
  left: -20px;
}
</style>
